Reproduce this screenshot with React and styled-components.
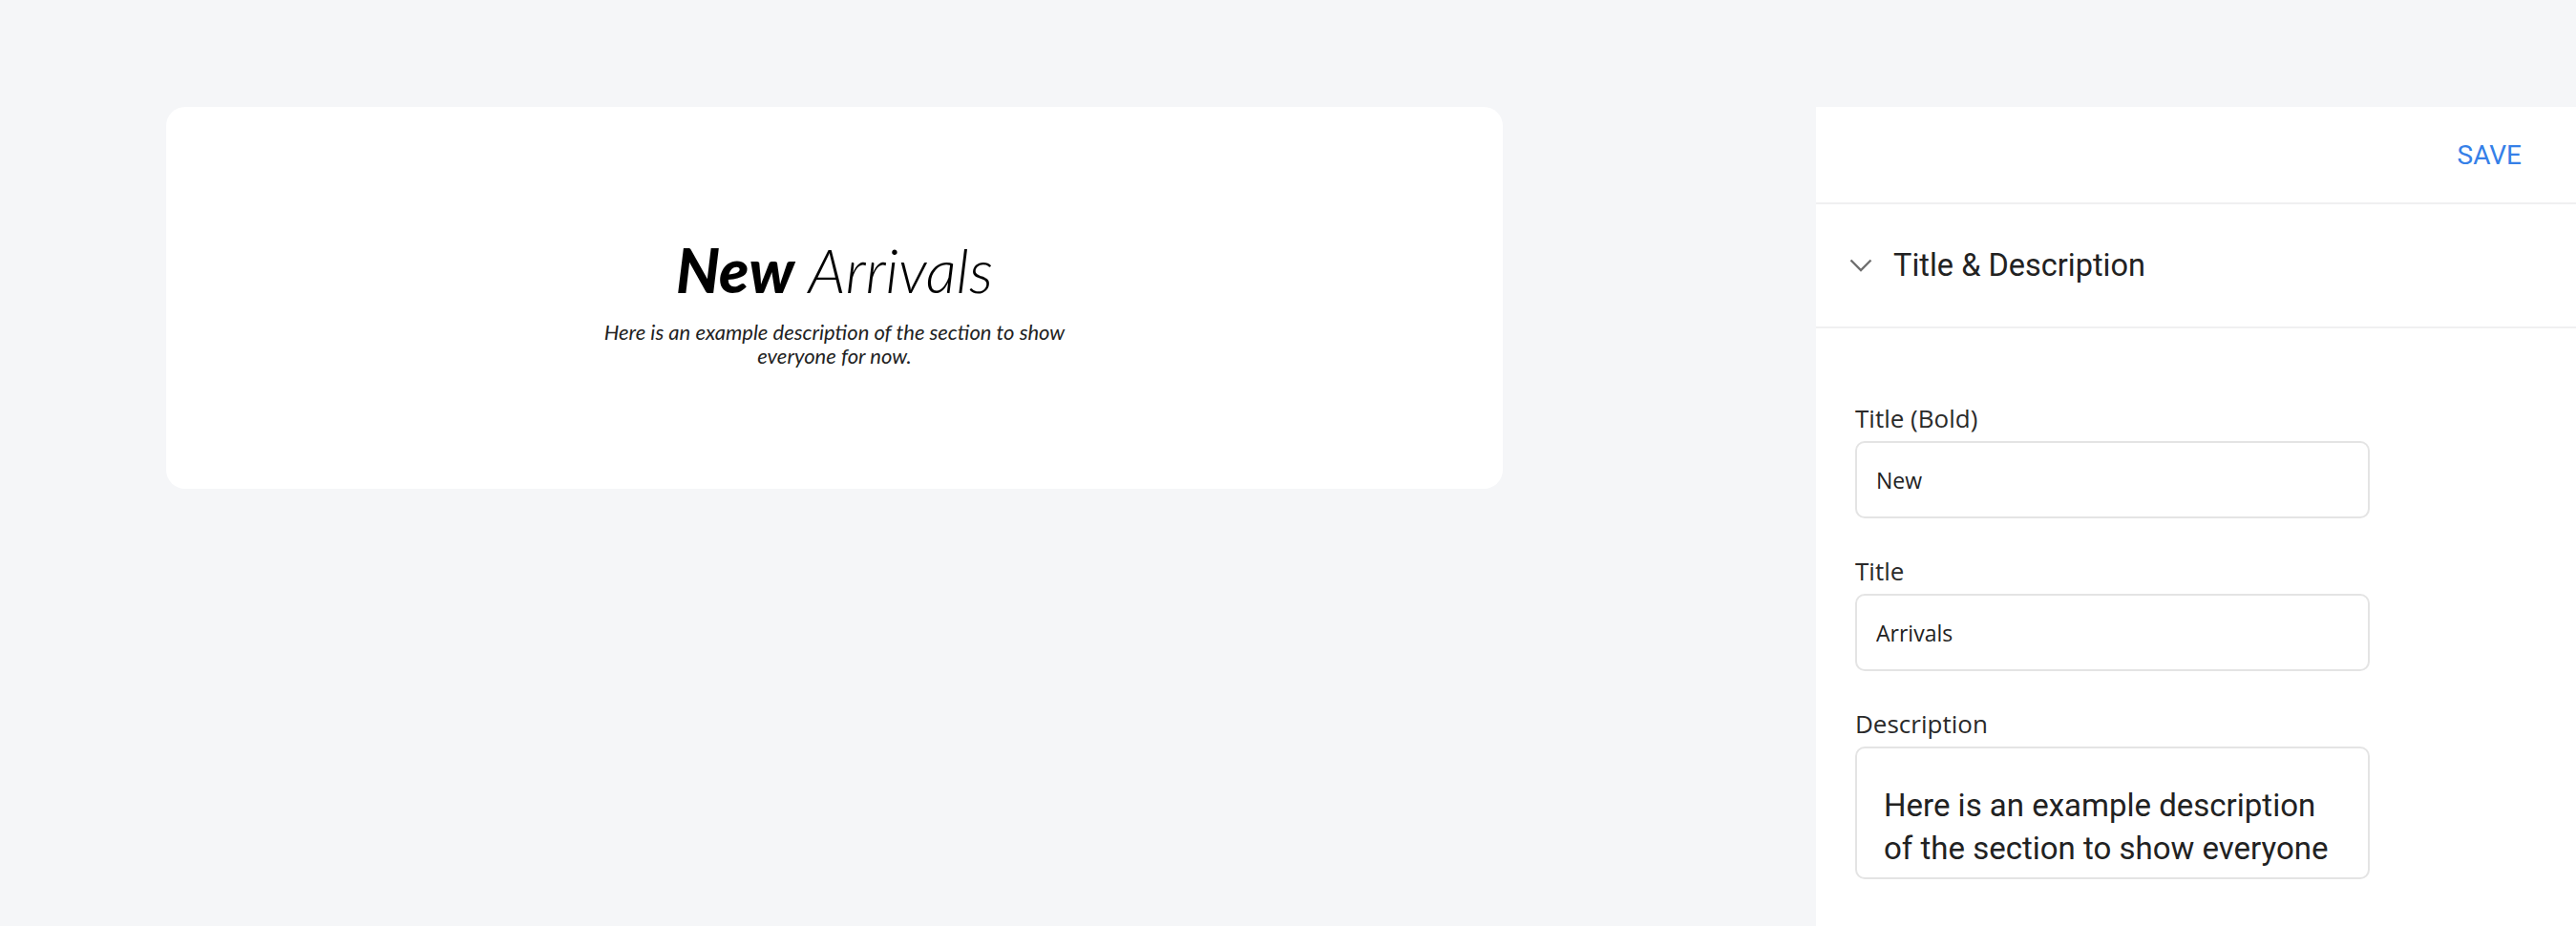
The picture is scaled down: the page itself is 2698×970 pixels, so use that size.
import styled, { createGlobalStyle } from 'styled-components'

const GlobalStyle = createGlobalStyle`
  html, body {
    margin: 0;
    padding: 0;
    background: #f5f6f8;
  }
  * {
    box-sizing: border-box;
  }
`

const Page = styled.div`
  display: flex;
  justify-content: space-between;
  align-items: flex-start;
  min-height: 100vh;
  padding: 112px 0 0 174px;
`

const PreviewCard = styled.section`
  width: 1400px;
  height: 400px;
  background: #fff;
  border-radius: 20px;
  display: flex;
  flex-direction: column;
  align-items: center;
  padding-top: 139px;
`

const Heading = styled.h1`
  margin: 0;
  font-family: Lato, 'Open Sans', sans-serif;
  font-size: 64px;
  line-height: 64px;
  font-style: italic;
  font-weight: 300;
  color: #000;
`

const Strong = styled.span`
  font-weight: 900;
`

const Blurb = styled.p`
  margin: 20px 0 0;
  max-width: 520px;
  font-family: Lato, 'Open Sans', sans-serif;
  font-style: italic;
  font-size: 22px;
  line-height: 25px;
  text-align: center;
  color: #222;
`

const Panel = styled.aside`
  width: 796px;
  min-height: calc(100vh - 112px);
  background: #fff;
  display: flex;
  flex-direction: column;
`

const Toolbar = styled.div`
  height: 102px;
  display: flex;
  align-items: center;
  justify-content: flex-end;
  padding-right: 57px;
  border-bottom: 2px solid #f0f0f1;
`

const SaveButton = styled.button`
  border: 0;
  background: none;
  padding: 0;
  cursor: pointer;
  font-family: Roboto, 'Liberation Sans', sans-serif;
  font-size: 28px;
  font-weight: 400;
  color: #3580e8;
  text-transform: uppercase;
`

const SectionHeader = styled.div`
  height: 130px;
  display: flex;
  align-items: center;
  gap: 22px;
  padding-left: 35px;
  border-bottom: 2px solid #f0f0f1;
`

const SectionTitle = styled.h2`
  margin: 0;
  font-family: Roboto, 'Liberation Sans', sans-serif;
  font-size: 32.5px;
  font-weight: 400;
  color: #222;
`

const Fields = styled.div`
  display: flex;
  flex-direction: column;
  gap: 39px;
  padding: 78px 0 0 41px;
`

const Field = styled.label`
  display: flex;
  flex-direction: column;
  gap: 8px;
  width: 539px;
`

const FieldLabel = styled.span`
  font-family: 'Open Sans', sans-serif;
  font-size: 26px;
  line-height: 32px;
  font-weight: 400;
  color: #2a2a2a;
`

const TextInput = styled.input`
  height: 81px;
  border: 2px solid #e4e4e4;
  border-radius: 10px;
  padding: 0 20px;
  font-family: 'Open Sans', sans-serif;
  font-size: 23px;
  font-weight: 500;
  color: #222;
  outline: none;
`

const TextArea = styled.textarea`
  height: 139px;
  border: 2px solid #e4e4e4;
  border-radius: 10px;
  padding: 37px 28px 0;
  font-family: Roboto, 'Liberation Sans', sans-serif;
  font-size: 33px;
  line-height: 45px;
  color: #222;
  resize: none;
  overflow: hidden;
  outline: none;
`

const Chevron = () => (
  <svg width="24" height="14" viewBox="0 0 24 14" fill="none">
    <polyline points="1.5,1.5 12,12 22.5,1.5" stroke="#6f6f6f" strokeWidth="2.4" />
  </svg>
)

const App = () => (
  <>
    <GlobalStyle />
    <Page>
      <PreviewCard>
        <Heading>
          <Strong>New</Strong> Arrivals
        </Heading>
        <Blurb>Here is an example description of the section to show everyone for now.</Blurb>
      </PreviewCard>

      <Panel>
        <Toolbar>
          <SaveButton>Save</SaveButton>
        </Toolbar>
        <SectionHeader>
          <Chevron />
          <SectionTitle>Title &amp; Description</SectionTitle>
        </SectionHeader>
        <Fields>
          <Field>
            <FieldLabel>Title (Bold)</FieldLabel>
            <TextInput defaultValue="New" />
          </Field>
          <Field>
            <FieldLabel>Title</FieldLabel>
            <TextInput defaultValue="Arrivals" />
          </Field>
          <Field>
            <FieldLabel>Description</FieldLabel>
            <TextArea defaultValue="Here is an example description of the section to show everyone for now." />
          </Field>
        </Fields>
      </Panel>
    </Page>
  </>
)

export default App
